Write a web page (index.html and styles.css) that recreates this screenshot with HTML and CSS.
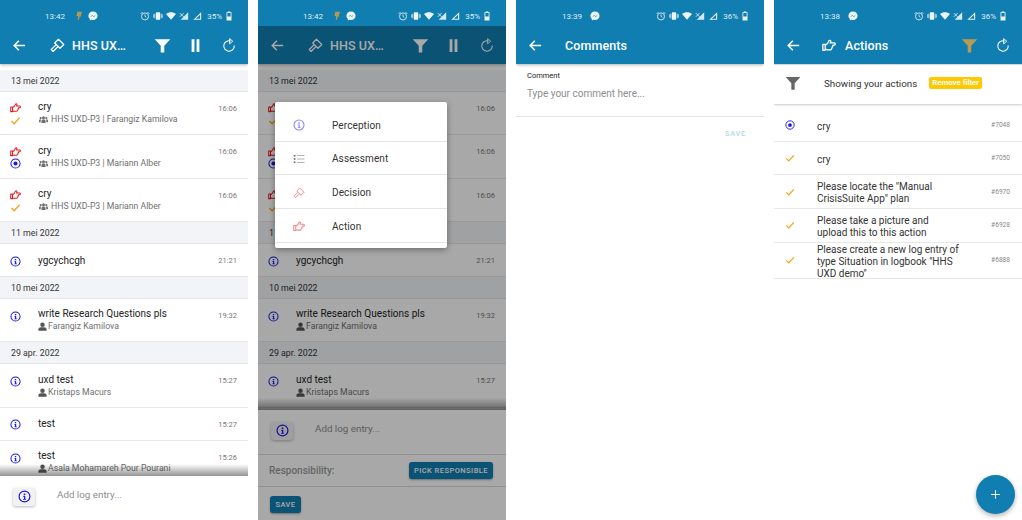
FILE: index.html
```html
<!DOCTYPE html>
<html lang="nl">
<head>
<meta charset="utf-8">
<title>CrisisSuite screens</title>
<link rel="stylesheet" href="styles.css">
</head>
<body>
<svg class="sprite" aria-hidden="true">
  <symbol id="i-back" viewBox="0 0 24 24"><path d="M21 12H4M11 4.500 3.500 12l7.500 7.500" fill="none" stroke="currentColor" stroke-width="2.400"/></symbol>
  <symbol id="i-gavel" viewBox="0 0 24 24"><g fill="none" stroke="currentColor" stroke-width="2" stroke-linejoin="round"><path d="M13.500 2 22 10.500 16 16.500 7.500 8z"/><path d="M9.500 11 2 18.500 5 21.500 12.500 14"/></g></symbol>
  <symbol id="i-hand" viewBox="0 0 24 24"><path d="M1.500 11h4v10h-4zM5.500 12.500 9.500 9.500 12 4.500c1.800-1.200 3.600.2 3 2.200L14 8.500h7c2.400 0 2.400 3.800 0 3.800h-2.500c.5 1.300 0 2.500-1 3 .3 1.200-.2 2.300-1.200 2.700.1 1.300-.8 2.300-2 2.300H9.500c-1.500 0-2.500-.8-4-1.300z" fill="none" stroke="currentColor" stroke-width="2.200" stroke-linejoin="round"/></symbol>
  <symbol id="i-filter" viewBox="0 0 24 24"><path d="M1 3h22l-8.500 9.500V22h-5v-9.500z" fill="currentColor"/></symbol>
  <symbol id="i-pause" viewBox="0 0 24 24"><path d="M6.500 3h4v18h-4zM13.500 3h4v18h-4z" fill="currentColor"/></symbol>
  <symbol id="i-reload" viewBox="0 0 24 24"><path d="M15 5.200A9 9 0 1 0 21 13" fill="none" stroke="currentColor" stroke-width="1.800"/><path d="M13 1l5.500 4.500L13 10z" fill="none" stroke="currentColor" stroke-width="1.500" stroke-linejoin="round"/></symbol>
  <symbol id="i-info" viewBox="0 0 24 24"><circle cx="12" cy="12" r="10" fill="none" stroke="currentColor" stroke-width="2.200"/><path d="M10.500 6.500h3v3h-3zM9.500 11h4v5.500h1.500V18H9.500v-1.500H11V12.500H9.500z" fill="currentColor"/></symbol>
  <symbol id="i-target" viewBox="0 0 24 24"><circle cx="12" cy="12" r="10" fill="none" stroke="currentColor" stroke-width="2.200"/><circle cx="12" cy="12" r="4.500" fill="currentColor"/></symbol>
  <symbol id="i-check" viewBox="0 0 24 24"><path d="M3 13l6 6L21 6" fill="none" stroke="currentColor" stroke-width="3"/></symbol>
  <symbol id="i-list" viewBox="0 0 24 24"><path d="M1.500 4h3.500v3H1.500zM1.500 10.500h3.500v3H1.500zM1.500 17h3.500v3H1.500zM8 4.800h15v1.400H8zM8 11.300h15v1.400H8zM8 17.800h15v1.400H8z" fill="currentColor"/></symbol>
  <symbol id="i-users" viewBox="0 0 24 24"><path d="M12 3a4 4 0 1 1 0 8 4 4 0 0 1 0-8zM4.500 5a3 3 0 1 1 0 6 3 3 0 0 1 0-6zM19.500 5a3 3 0 1 1 0 6 3 3 0 0 1 0-6zM6.500 21v-4c0-3 2-5 3.500-5h4c1.500 0 3.500 2 3.500 5v4zM0 19v-4c0-2 1.200-3 2.500-3h3c-.7 1-1 2.500-1 4.500V19zM24 19v-4c0-2-1.200-3-2.500-3h-3c.7 1 1 2.500 1 4.500V19z" fill="currentColor"/></symbol>
  <symbol id="i-user" viewBox="0 0 24 24"><path d="M12 1a6 6 0 1 1 0 12 6 6 0 0 1 0-12zM1 23v-3C1 16 4.500 14 8 14h8c3.500 0 7 2 7 6v3z" fill="currentColor"/></symbol>
  <symbol id="i-plus" viewBox="0 0 24 24"><path d="M12 4v16M4 12h16" fill="none" stroke="currentColor" stroke-width="2"/></symbol>
  <symbol id="i-msg" viewBox="0 0 24 24"><path d="M12 1C5.500 1 1 5.500 1 11.500c0 3.200 1.400 5.800 3.500 7.600V23l3.700-2c1.200.4 2.500.6 3.800.6 6.500 0 11-4.500 11-10.100S18.500 1 12 1z" fill="currentColor"/><path d="M5.500 14.500l4.500-5 3 3 5.500-3-4.500 5-3-3z" fill="#117eb1"/></symbol>
  <symbol id="i-bolt" viewBox="0 0 24 24"><path d="M8 2h11l-3 12h-3l-1 8-3-2 1-8H6z" fill="#b29a52"/></symbol>
  <symbol id="i-alarm" viewBox="0 0 24 24"><circle cx="12" cy="13" r="8.500" fill="none" stroke="currentColor" stroke-width="2"/><path d="M12 8v5l3.500 2" fill="none" stroke="currentColor" stroke-width="1.800"/><path d="M1.500 7 6 2.500M22.500 7 18 2.500" stroke="currentColor" stroke-width="2"/></symbol>
  <symbol id="i-vib" viewBox="0 0 24 24"><rect x="7" y="3" width="10" height="18" rx="1.500" fill="currentColor"/><path d="M1 8h2v8H1zM4 6h1.500v12H4zM18.500 6H20v12h-1.500zM21 8h2v8h-2z" fill="currentColor"/></symbol>
  <symbol id="i-wifi" viewBox="0 0 24 24"><path d="M12 21 0 7c7-5.500 17-5.500 24 0z" fill="currentColor"/></symbol>
  <symbol id="i-sigx" viewBox="0 0 24 24"><path d="M22 3v18H4z" fill="currentColor" opacity=".9"/><path d="M2 5l9 9M11 5l-9 9" stroke="#fff" stroke-width="1.800"/></symbol>
  <symbol id="i-sig" viewBox="0 0 24 24"><path d="M22 3v18H3zM19.500 9 9 18.700h10.500z" fill="currentColor" fill-rule="evenodd"/></symbol>
  <symbol id="i-batt" viewBox="0 0 24 24"><path d="M9 1h6v2h3v20H6V3h3zM8 5v8h8V5z" fill="currentColor" fill-rule="evenodd"/></symbol>
</svg>

<main class="board">

  <section class="phone">
    <header class="appbar">
      <div class="status">
        <span class="clock">13:42</span>
        <svg class="st"><use href="#i-bolt"/></svg>
        <svg class="st st-msg"><use href="#i-msg"/></svg>
        <span class="st-right">
          <svg class="st"><use href="#i-alarm"/></svg><svg class="st"><use href="#i-vib"/></svg><svg class="st"><use href="#i-wifi"/></svg><svg class="st"><use href="#i-sigx"/></svg><svg class="st"><use href="#i-sig"/></svg><span class="pct">35%</span><svg class="st"><use href="#i-batt"/></svg>
        </span>
      </div>
      <div class="toolbar">
        <svg class="tb-back"><use href="#i-back"/></svg>
        <svg class="tb-kind"><use href="#i-gavel"/></svg>
        <h1 class="tb-title">HHS UX…</h1>
        <svg class="tb-filter"><use href="#i-filter"/></svg>
        <svg class="tb-pause"><use href="#i-pause"/></svg>
        <svg class="tb-reload"><use href="#i-reload"/></svg>
      </div>
    </header>
    <div class="log">
      <div class="day">13 mei 2022</div>
      <div class="row">
        <div class="marks"><svg class="mk red"><use href="#i-hand"/></svg><svg class="mk orange"><use href="#i-check"/></svg></div>
        <div class="body"><div class="title">cry</div><div class="sub"><svg class="who-g"><use href="#i-users"/></svg>HHS UXD-P3 | Farangiz Kamilova</div></div>
        <time class="time">16:06</time>
      </div>
      <div class="row">
        <div class="marks"><svg class="mk red"><use href="#i-hand"/></svg><svg class="mk blue"><use href="#i-target"/></svg></div>
        <div class="body"><div class="title">cry</div><div class="sub"><svg class="who-g"><use href="#i-users"/></svg>HHS UXD-P3 | Mariann Alber</div></div>
        <time class="time">16:06</time>
      </div>
      <div class="row">
        <div class="marks"><svg class="mk red"><use href="#i-hand"/></svg><svg class="mk orange"><use href="#i-check"/></svg></div>
        <div class="body"><div class="title">cry</div><div class="sub"><svg class="who-g"><use href="#i-users"/></svg>HHS UXD-P3 | Mariann Alber</div></div>
        <time class="time">16:06</time>
      </div>
      <div class="day">11 mei 2022</div>
      <div class="row row-s">
        <div class="marks"><svg class="mk blue"><use href="#i-info"/></svg></div>
        <div class="body"><div class="title">ygcychcgh</div></div>
        <time class="time">21:21</time>
      </div>
      <div class="day">10 mei 2022</div>
      <div class="row">
        <div class="marks marks-top"><svg class="mk blue"><use href="#i-info"/></svg></div>
        <div class="body"><div class="title">write Research Questions pls</div><div class="sub"><svg class="who"><use href="#i-user"/></svg>Farangiz Kamilova</div></div>
        <time class="time">19:32</time>
      </div>
      <div class="day">29 apr. 2022</div>
      <div class="row">
        <div class="marks marks-top"><svg class="mk blue"><use href="#i-info"/></svg></div>
        <div class="body"><div class="title">uxd test</div><div class="sub"><svg class="who"><use href="#i-user"/></svg>Kristaps Macurs</div></div>
        <time class="time">15:27</time>
      </div>
      <div class="row row-s">
        <div class="marks"><svg class="mk blue"><use href="#i-info"/></svg></div>
        <div class="body"><div class="title">test</div></div>
        <time class="time">15:27</time>
      </div>
      <div class="row">
        <div class="marks marks-top"><svg class="mk blue"><use href="#i-info"/></svg></div>
        <div class="body"><div class="title">test</div><div class="sub"><svg class="who"><use href="#i-user"/></svg>Asala Mohamareh Pour Pourani</div></div>
        <time class="time">15:26</time>
      </div>
    </div>
    <div class="composer">
      <div class="entry">
        <button class="kind"><svg><use href="#i-info"/></svg></button>
        <span class="ph">Add log entry...</span>
      </div>
    </div>
  </section>

  <section class="phone">
    <header class="appbar">
      <div class="status">
        <span class="clock">13:42</span>
        <svg class="st"><use href="#i-bolt"/></svg>
        <svg class="st st-msg"><use href="#i-msg"/></svg>
        <span class="st-right">
          <svg class="st"><use href="#i-alarm"/></svg><svg class="st"><use href="#i-vib"/></svg><svg class="st"><use href="#i-wifi"/></svg><svg class="st"><use href="#i-sigx"/></svg><svg class="st"><use href="#i-sig"/></svg><span class="pct">35%</span><svg class="st"><use href="#i-batt"/></svg>
        </span>
      </div>
      <div class="toolbar">
        <svg class="tb-back"><use href="#i-back"/></svg>
        <svg class="tb-kind"><use href="#i-gavel"/></svg>
        <h1 class="tb-title">HHS UX…</h1>
        <svg class="tb-filter"><use href="#i-filter"/></svg>
        <svg class="tb-pause"><use href="#i-pause"/></svg>
        <svg class="tb-reload"><use href="#i-reload"/></svg>
      </div>
    </header>
    <div class="log">
      <div class="day">13 mei 2022</div>
      <div class="row">
        <div class="marks"><svg class="mk red"><use href="#i-hand"/></svg><svg class="mk orange"><use href="#i-check"/></svg></div>
        <div class="body"><div class="title">cry</div><div class="sub"><svg class="who-g"><use href="#i-users"/></svg>HHS UXD-P3 | Farangiz Kamilova</div></div>
        <time class="time">16:06</time>
      </div>
      <div class="row">
        <div class="marks"><svg class="mk red"><use href="#i-hand"/></svg><svg class="mk blue"><use href="#i-target"/></svg></div>
        <div class="body"><div class="title">cry</div><div class="sub"><svg class="who-g"><use href="#i-users"/></svg>HHS UXD-P3 | Mariann Alber</div></div>
        <time class="time">16:06</time>
      </div>
      <div class="row">
        <div class="marks"><svg class="mk red"><use href="#i-hand"/></svg><svg class="mk orange"><use href="#i-check"/></svg></div>
        <div class="body"><div class="title">cry</div><div class="sub"><svg class="who-g"><use href="#i-users"/></svg>HHS UXD-P3 | Mariann Alber</div></div>
        <time class="time">16:06</time>
      </div>
      <div class="day">11 mei 2022</div>
      <div class="row row-s">
        <div class="marks"><svg class="mk blue"><use href="#i-info"/></svg></div>
        <div class="body"><div class="title">ygcychcgh</div></div>
        <time class="time">21:21</time>
      </div>
      <div class="day">10 mei 2022</div>
      <div class="row">
        <div class="marks marks-top"><svg class="mk blue"><use href="#i-info"/></svg></div>
        <div class="body"><div class="title">write Research Questions pls</div><div class="sub"><svg class="who"><use href="#i-user"/></svg>Farangiz Kamilova</div></div>
        <time class="time">19:32</time>
      </div>
      <div class="day">29 apr. 2022</div>
      <div class="row">
        <div class="marks marks-top"><svg class="mk blue"><use href="#i-info"/></svg></div>
        <div class="body"><div class="title">uxd test</div><div class="sub"><svg class="who"><use href="#i-user"/></svg>Kristaps Macurs</div></div>
        <time class="time">15:27</time>
      </div>
    </div>
    <div class="composer">
      <div class="entry">
        <button class="kind"><svg><use href="#i-info"/></svg></button>
        <span class="ph">Add log entry...</span>
      </div>
      <div class="resp">
        <span class="resp-label">Responsibility:</span>
        <button class="btn btn-pick">PICK RESPONSIBLE</button>
      </div>
      <div class="save-row"><button class="btn btn-save">SAVE</button></div>
    </div>
    <div class="scrim"></div>
    <ul class="menu">
      <li class="menu-item"><svg class="mi mi-info"><use href="#i-info"/></svg>Perception</li>
      <li class="menu-item"><svg class="mi mi-list"><use href="#i-list"/></svg>Assessment</li>
      <li class="menu-item"><svg class="mi mi-pink"><use href="#i-gavel"/></svg>Decision</li>
      <li class="menu-item"><svg class="mi mi-pink"><use href="#i-hand"/></svg>Action</li>
    </ul>
  </section>

  <section class="phone">
    <header class="appbar">
      <div class="status status-plain">
        <span class="clock">13:39</span>
        <svg class="st st-msg"><use href="#i-msg"/></svg>
        <span class="st-right">
          <svg class="st"><use href="#i-alarm"/></svg><svg class="st"><use href="#i-vib"/></svg><svg class="st"><use href="#i-wifi"/></svg><svg class="st"><use href="#i-sigx"/></svg><svg class="st"><use href="#i-sig"/></svg><span class="pct">36%</span><svg class="st"><use href="#i-batt"/></svg>
        </span>
      </div>
      <div class="toolbar">
        <svg class="tb-back"><use href="#i-back"/></svg>
        <h1 class="tb-title tb-title-wide">Comments</h1>
      </div>
    </header>
    <form class="comment">
      <div class="c-label">Comment</div>
      <div class="c-ph">Type your comment here...</div>
    </form>
    <div class="c-actions"><span class="c-save">SAVE</span></div>
  </section>

  <section class="phone">
    <header class="appbar appbar-flat">
      <div class="status status-plain">
        <span class="clock">13:38</span>
        <svg class="st st-msg"><use href="#i-msg"/></svg>
        <span class="st-right">
          <svg class="st"><use href="#i-alarm"/></svg><svg class="st"><use href="#i-vib"/></svg><svg class="st"><use href="#i-wifi"/></svg><svg class="st"><use href="#i-sigx"/></svg><svg class="st"><use href="#i-sig"/></svg><span class="pct">36%</span><svg class="st"><use href="#i-batt"/></svg>
        </span>
      </div>
      <div class="toolbar">
        <svg class="tb-back"><use href="#i-back"/></svg>
        <svg class="tb-kind tb-kind-a"><use href="#i-hand"/></svg>
        <h1 class="tb-title tb-title-a">Actions</h1>
        <svg class="tb-filter tb-filter-on"><use href="#i-filter"/></svg>
        <svg class="tb-reload"><use href="#i-reload"/></svg>
      </div>
    </header>
    <div class="filterbar">
      <svg class="fb-icon"><use href="#i-filter"/></svg>
      <span class="fb-text">Showing your actions</span>
      <span class="fb-chip">Remove filter</span>
    </div>
    <div class="actions">
      <div class="a-row a-first"><svg class="mk blue"><use href="#i-target"/></svg><div class="a-text">cry</div><span class="a-id">#7048</span></div>
      <div class="a-row a-second"><svg class="mk orange"><use href="#i-check"/></svg><div class="a-text">cry</div><span class="a-id">#7050</span></div>
      <div class="a-row"><svg class="mk orange"><use href="#i-check"/></svg><div class="a-text">Please locate the "Manual CrisisSuite App" plan</div><span class="a-id">#6970</span></div>
      <div class="a-row"><svg class="mk orange"><use href="#i-check"/></svg><div class="a-text">Please take a picture and upload this to this action</div><span class="a-id">#6928</span></div>
      <div class="a-row a-tall"><svg class="mk orange"><use href="#i-check"/></svg><div class="a-text">Please create a new log entry of type Situation in logbook "HHS UXD demo"</div><span class="a-id">#6888</span></div>
    </div>
    <button class="fab"><svg><use href="#i-plus"/></svg></button>
  </section>

</main>
</body>
</html>
```
FILE: styles.css
```css
* { box-sizing: border-box; }
html, body { margin: 0; height: 100%; background: #fff; }
body { font-family: Roboto, "Liberation Sans", sans-serif; color: #222; overflow: hidden; }
.sprite { display: none; }
svg { display: block; flex: none; }
h1, ul { margin: 0; padding: 0; }

.board { display: flex; gap: 10px; width: 1022px; height: 520px; }
.phone { position: relative; width: 248px; height: 520px; flex: none; display: flex; flex-direction: column; overflow: hidden; background: #fff; }

.appbar { height: 64px; flex: none; background: #117eb1; color: #fff; box-shadow: 0 1px 3px rgba(0,0,0,.3); position: relative; z-index: 2; }
.appbar-flat { box-shadow: 0 1px 1px rgba(0,0,0,.15); }
.status { height: 26px; display: flex; align-items: center; padding: 6px 14px 0 45px; font-size: 8px; color: #dfeef6; }
.clock { width: 24px; margin-right: 5px; }
.st { width: 10px; height: 10px; margin-right: 3px; color: #eaf4f9; }
.st-msg { margin-left: 1px; }
.status-plain .clock { margin-left: 1px; margin-right: 3px; }
.st-right { margin-left: auto; display: flex; align-items: center; }
.st-right .st { margin-right: 3px; }
.st-right .st:last-child { margin-right: 0; }
.pct { margin: 0 2px 0 2px; }
.toolbar { height: 38px; display: flex; align-items: center; padding: 0 12px 0 12px; }
.tb-back { width: 15px; height: 15px; }
.tb-kind { width: 15px; height: 15px; margin-left: 23px; }
.tb-kind-a { margin-left: 21px; width: 14px; height: 14px; }
.tb-title { font-size: 12.500px; font-weight: 500; margin-left: 7px; letter-spacing: .1px; }
.tb-title-wide { margin-left: 22px; }
.tb-title-a { margin-left: 9px; }
.tb-filter { width: 17px; height: 17px; margin-left: auto; }
.tb-filter-on { color: #b99a50; }
.tb-pause { width: 17px; height: 17px; margin-left: 16px; }
.tb-reload { width: 14px; height: 14px; margin-left: 18px; }

.log { flex: 1; min-height: 0; overflow: hidden; padding-top: 6px; position: relative; }
.log::after { content: ""; position: absolute; left: 0; right: 0; bottom: 0; height: 12px; background: linear-gradient(rgba(0,0,0,0), rgba(0,0,0,.42)); }
.day { height: 21.700px; background: #f3f4f8; border-bottom: 1px solid #e4e5e8; display: flex; align-items: center; padding: 1px 0 0 11px; font-size: 8.800px; color: #333; }
.row { height: 43.600px; display: flex; align-items: center; border-bottom: 1px solid #e8e8e8; padding: 0 11px 0 10px; }
.row-s { height: 33px; }
.marks { width: 28px; flex: none; display: flex; flex-direction: column; gap: 1.500px; padding-top: 2px; }
.marks-top { margin-bottom: 9px; }
.mk { width: 11px; height: 11px; }
.red { color: #e8141c; }
.orange { color: #f5a623; }
.blue { color: #1a1ae0; }
.body { flex: 1; min-width: 0; padding-top: .6px; }
.row-s .body { padding-top: 0; }
.title { font-size: 10px; color: #222; line-height: 13px; }
.sub { font-size: 8.700px; color: #6f6f6f; line-height: 13px; display: flex; align-items: center; gap: 2px; }
.who-g { width: 11px; height: 9px; color: #6f6f6f; }
.who { width: 9px; height: 9px; color: #555; margin-right: -1px; }
.time { font-size: 7.500px; color: #777; align-self: flex-start; margin-top: 12px; }

.composer { flex: none; background: #fff; }
.entry { height: 44px; display: flex; align-items: center; padding: 0 0 3px 13px; }
.kind { width: 22px; height: 18px; padding: 0; border: 0; border-radius: 3px; background: #f1f2f6; box-shadow: 0 1px 3px rgba(0,0,0,.28); color: #1a1ae0; display: flex; align-items: center; justify-content: center; }
.kind svg { width: 13px; height: 13px; }
.ph { margin-left: 22px; margin-bottom: 4px; font-size: 9.800px; color: #8d8d8d; }
.resp { height: 33px; border-top: 1px solid #ddd; border-bottom: 1px solid #ddd; display: flex; align-items: center; justify-content: space-between; padding: 0 13px 0 11px; }
.resp-label { font-size: 10px; font-weight: 500; color: #9a9a9a; }
.btn { display: block; border: 0; border-radius: 3px; background: #117eb1; color: #fff; font: 500 7.500px Roboto, sans-serif; letter-spacing: .45px; box-shadow: 0 1px 2px rgba(0,0,0,.35); padding: 0; }
.btn-pick { width: 84px; height: 17px; }
.save-row { height: 33px; padding: 9px 0 0 12px; }
.btn-save { width: 31px; height: 17px; }

.scrim { position: absolute; left: 0; right: 0; top: 26px; bottom: 0; background: rgba(0,0,0,.34); z-index: 3; }
.menu { position: absolute; z-index: 4; left: 17px; top: 102px; width: 172px; height: 146px; list-style: none; background: #fff; border-radius: 2px; box-shadow: 0 2px 6px rgba(0,0,0,.35); }
.menu-item { height: 33.700px; display: flex; align-items: center; border-bottom: 1px solid #e6e6e6; font-size: 10px; color: #333; padding: 2px 0 0 18px; letter-spacing: .1px; }
.menu-item:first-child { height: 39.500px; padding-top: 8px; }
.mi { width: 12px; height: 12px; margin-right: 27px; }
.mi-info { color: #8b8bf5; }
.mi-list { color: #666; }
.mi-pink { color: #f58b8b; }

.comment { height: 53px; border-bottom: 1px solid #e4e4e4; padding: 7px 11px 0; flex: none; }
.c-label { font-size: 7.500px; color: #222; }
.c-ph { font-size: 10px; color: #8d8d8d; margin-top: 8px; }
.c-actions { display: flex; justify-content: flex-end; padding: 12px 18px 0 0; }
.c-save { font-size: 7.500px; font-weight: 500; letter-spacing: .7px; color: #b3d7e7; }

.filterbar { height: 40px; flex: none; display: flex; align-items: center; padding: 0 0 2px 11px; box-shadow: 0 1px 2px rgba(0,0,0,.22); position: relative; z-index: 1; }
.fb-icon { width: 16px; height: 16px; color: #666; }
.fb-text { margin-left: 23px; font-size: 9.800px; color: #333; }
.fb-chip { margin-left: 12px; background: #ffc800; color: #fff; font-size: 7.800px; font-weight: 700; padding: 0 3px; height: 12px; line-height: 12px; border-radius: 2px; }
.actions { flex: none; }
.a-row { height: 33.800px; display: flex; align-items: center; padding: 0 12px 0 11px; border-bottom: 1px solid #e8e8e8; }
.a-first { height: 37.700px; padding-top: 6px; }
.a-second { height: 33.600px; }
.a-tall { height: 36px; }
.a-row .mk { width: 10px; height: 10px; }
.a-text { flex: 1; min-width: 0; margin-left: 22px; margin-right: 32px; padding-top: 3px; font-size: 10px; line-height: 11.800px; color: #333; }
.a-id { font-size: 6.600px; color: #888; }

.fab { position: absolute; right: 7px; bottom: 6px; width: 39px; height: 39px; border: 0; padding: 0; border-radius: 50%; background: #117eb1; color: #fff; box-shadow: 0 2px 5px rgba(0,0,0,.3); display: flex; align-items: center; justify-content: center; }
.fab svg { width: 13px; height: 13px; }
```
